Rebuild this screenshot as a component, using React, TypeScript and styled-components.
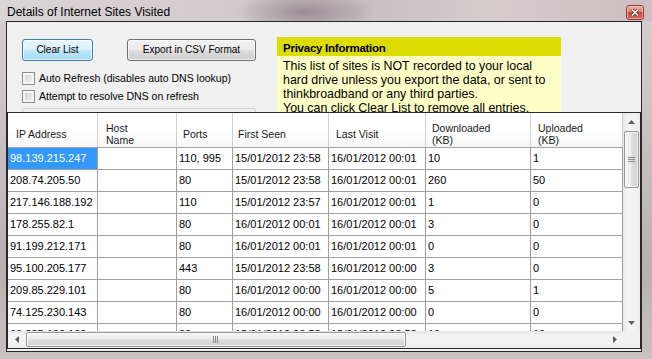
import styled, { createGlobalStyle } from 'styled-components';

const GlobalStyle = createGlobalStyle`
  html, body {
    margin: 0;
    padding: 0;
    background: #cbc3c5;
  }
  body {
    width: 652px;
    height: 359px;
    overflow: hidden;
    font-family: "Liberation Sans", Arial, sans-serif;
  }
`;

type Site = [string, string, string, string, string, string, string];

const sites: Site[] = [
  ['98.139.215.247', '', '110, 995', '15/01/2012 23:58', '16/01/2012 00:01', '10', '1'],
  ['208.74.205.50', '', '80', '15/01/2012 23:58', '16/01/2012 00:01', '260', '50'],
  ['217.146.188.192', '', '110', '15/01/2012 23:57', '16/01/2012 00:01', '1', '0'],
  ['178.255.82.1', '', '80', '16/01/2012 00:01', '16/01/2012 00:01', '3', '0'],
  ['91.199.212.171', '', '80', '16/01/2012 00:01', '16/01/2012 00:01', '0', '0'],
  ['95.100.205.177', '', '443', '15/01/2012 23:58', '16/01/2012 00:00', '3', '0'],
  ['209.85.229.101', '', '80', '16/01/2012 00:00', '16/01/2012 00:00', '5', '1'],
  ['74.125.230.143', '', '80', '16/01/2012 00:00', '16/01/2012 00:00', '0', '0'],
  ['66.235.132.160', '', '80', '15/01/2012 23:58', '15/01/2012 23:58', '10', '10'],
];

const columns = [
  { title: 'IP Address', pad: 8 },
  { title: 'Host\nName', pad: 8 },
  { title: 'Ports', pad: 6 },
  { title: 'First Seen', pad: 5 },
  { title: 'Last Visit', pad: 7 },
  { title: 'Downloaded\n(KB)', pad: 6 },
  { title: 'Uploaded\n(KB)', pad: 7 },
];

const colTemplate = '90px 79px 56px 96px 97px 105px 92px';

function Arrow({ dir }: { dir: 'up' | 'down' | 'left' | 'right' }) {
  const vertical = dir === 'up' || dir === 'down';
  const d = {
    up: 'M0 4 L3.5 0 L7 4 Z',
    down: 'M0 0 L7 0 L3.5 4 Z',
    left: 'M4 0 L4 7 L0 3.5 Z',
    right: 'M0 0 L4 3.5 L0 7 Z',
  }[dir];
  return (
    <svg width={vertical ? 7 : 4} height={vertical ? 4 : 7}>
      <path d={d} fill="#5e5e5e" />
    </svg>
  );
}

function App() {
  return (
    <>
      <GlobalStyle />
      <Window>
        <TitleBar>
          <Title>Details of Internet Sites Visited</Title>
          <CloseButton>
            <svg width="8" height="7" viewBox="0 0 8 7">
              <path d="M1 0.5 L7 6.5 M7 0.5 L1 6.5" stroke="#5a1a14" strokeWidth="3" />
              <path d="M1 0.5 L7 6.5 M7 0.5 L1 6.5" stroke="#ffffff" strokeWidth="1.6" />
            </svg>
          </CloseButton>
        </TitleBar>

        <Client>
          <TopPanel>
            <LeftCol>
              <ButtonRow>
                <WinButton $width={71} $default>
                  Clear List
                </WinButton>
                <WinButton $width={129}>Export in CSV Format</WinButton>
              </ButtonRow>
              <CheckRow>
                <CheckBox />
                <CheckLabel>Auto Refresh (disables auto DNS lookup)</CheckLabel>
              </CheckRow>
              <CheckRow>
                <CheckBox />
                <CheckLabel>Attempt to resolve DNS on refresh</CheckLabel>
              </CheckRow>
              <GroupEdge />
            </LeftCol>

            <Privacy>
              <PrivacyHead>Privacy Information</PrivacyHead>
              <PrivacyBody>
                This list of sites is NOT recorded to your local
                <br />
                hard drive unless you export the data, or sent to
                <br />
                thinkbroadband or any third parties.
                <br />
                You can click Clear List to remove all entries.
              </PrivacyBody>
            </Privacy>
          </TopPanel>

          <Grid>
            <DataArea>
              <HeaderRow>
                {columns.map((c) => (
                  <HeaderCell key={c.title} $pad={c.pad}>
                    {c.title}
                  </HeaderCell>
                ))}
              </HeaderRow>
              <Rows>
                {sites.map((s, i) => (
                  <DataRow key={s[0]}>
                    {s.map((v, j) => (
                      <DataCell key={j} $selected={i === 0 && j === 0}>
                        {v}
                      </DataCell>
                    ))}
                  </DataRow>
                ))}
              </Rows>
            </DataArea>

            <VScroll>
              <ArrowBox>
                <Arrow dir="up" />
              </ArrowBox>
              <VTrack>
                <VThumb>
                  <svg width="7" height="6">
                    <path d="M0 0.5 H7 M0 2.5 H7 M0 4.5 H7" stroke="#8a8a8a" strokeWidth="1" />
                  </svg>
                </VThumb>
              </VTrack>
              <ArrowBox>
                <Arrow dir="down" />
              </ArrowBox>
            </VScroll>

            <HScroll>
              <ArrowBox>
                <Arrow dir="left" />
              </ArrowBox>
              <HTrack>
                <HThumb>
                  <svg width="6" height="7">
                    <path d="M0.5 0 V7 M2.5 0 V7 M4.5 0 V7" stroke="#8a8a8a" strokeWidth="1" />
                  </svg>
                </HThumb>
              </HTrack>
              <ArrowBox>
                <Arrow dir="right" />
              </ArrowBox>
            </HScroll>

            <Corner />
          </Grid>
        </Client>
      </Window>
    </>
  );
}

export default App;

const Window = styled.div`
  width: 652px;
  height: 359px;
  display: flex;
  flex-direction: column;
  background: linear-gradient(180deg, #d6d0d2 0%, #c8bfc1 40%, #bbb0b0 75%, #c9c1c1 100%);
`;

const TitleBar = styled.div`
  height: 21px;
  flex-shrink: 0;
  display: flex;
  justify-content: space-between;
  align-items: flex-start;
  padding: 0 8px 0 7px;
  box-sizing: border-box;
  background: radial-gradient(ellipse 70px 22px at 305px 12px, rgba(115, 95, 105, 0.55), rgba(115, 95, 105, 0)),
    linear-gradient(90deg, #d9d4d6 0%, #d2cbce 35%, #c9bec2 55%, #d8cbce 75%, #cdbdc1 100%);
`;

const Title = styled.span`
  padding-top: 2px;
  font-size: 12px;
  line-height: 21px;
  color: #000;
  white-space: nowrap;
`;

const CloseButton = styled.div`
  margin-top: 5px;
  width: 18px;
  height: 15px;
  box-sizing: border-box;
  border: 1px solid #8d3b33;
  border-radius: 3px;
  background: linear-gradient(#eab0a6, #d98175 45%, #c5483d 50%, #d66d60);
  box-shadow: inset 0 0 0 1px rgba(255, 220, 215, 0.5);
  display: flex;
  align-items: center;
  justify-content: center;
`;

const Client = styled.div`
  flex: 1;
  min-height: 0;
  margin: 0 10px 7px 6px;
  box-sizing: border-box;
  border: 1px solid #262626;
  padding-bottom: 2px;
  background: #f0f0f0;
  display: flex;
  flex-direction: column;
`;

const TopPanel = styled.div`
  height: 90px;
  flex-shrink: 0;
  box-sizing: border-box;
  padding: 15px 0 0 15px;
  display: flex;
  align-items: flex-start;
  overflow: hidden;
`;

const LeftCol = styled.div`
  width: 234px;
  flex-shrink: 0;
  padding-top: 2px;
  display: flex;
  flex-direction: column;
`;

const ButtonRow = styled.div`
  display: flex;
  justify-content: space-between;
  margin-bottom: 11px;
`;

const WinButton = styled.button<{ $width: number; $default?: boolean }>`
  width: ${(p) => p.$width}px;
  height: 22px;
  padding: 0;
  box-sizing: border-box;
  border: 1px solid ${(p) => (p.$default ? '#3c7fb1' : '#707070')};
  border-radius: 3px;
  background: ${(p) =>
    p.$default
      ? 'linear-gradient(#eaf6fd, #d9f0fc 50%, #bee6fd 50%, #a7d9f5)'
      : 'linear-gradient(#f2f2f2, #ebebeb 50%, #dddddd 50%, #cfcfcf)'};
  box-shadow: inset 0 0 0 1px rgba(255, 255, 255, 0.65);
  font-family: "Liberation Sans", Arial, sans-serif;
  font-size: 10px;
  line-height: 20px;
  color: #000;
  text-align: center;
  white-space: nowrap;
`;

const CheckRow = styled.label`
  height: 18px;
  display: flex;
  align-items: flex-start;
  gap: 4px;
`;

const CheckBox = styled.span`
  width: 13px;
  height: 13px;
  flex-shrink: 0;
  box-sizing: border-box;
  border: 1px solid #8e8f8f;
  background: linear-gradient(135deg, #cbcfd5, #f6f6f6);
  box-shadow: inset 0 0 0 2px #f4f4f4;
`;

const CheckLabel = styled.span`
  font-size: 10.5px;
  line-height: 13px;
  color: #000;
  white-space: nowrap;
`;

const GroupEdge = styled.div`
  height: 12px;
  border: 1px solid #d2d2d2;
  border-radius: 3px;
`;

const Privacy = styled.div`
  margin-left: 21px;
  width: 284px;
  height: 100px;
  flex-shrink: 0;
  background: #ffffc8;
`;

const PrivacyHead = styled.div`
  height: 19px;
  box-sizing: border-box;
  padding: 4px 0 0 6px;
  background: #dcdc00;
  font-size: 11.5px;
  font-weight: bold;
  line-height: 15px;
  letter-spacing: -0.25px;
  color: #000;
`;

const PrivacyBody = styled.div`
  padding: 3px 0 0 6px;
  font-size: 12.4px;
  line-height: 14px;
  color: #000;
  white-space: nowrap;
`;

const Grid = styled.div`
  height: 237px;
  flex-shrink: 0;
  box-sizing: border-box;
  border: 1px solid #2b2b2b;
  background: #fff;
  display: grid;
  grid-template-columns: 615px 17px;
  grid-template-rows: 218px 17px;
`;

const DataArea = styled.div`
  display: flex;
  flex-direction: column;
  overflow: hidden;
`;

const HeaderRow = styled.div`
  height: 35px;
  flex-shrink: 0;
  box-sizing: border-box;
  display: grid;
  grid-template-columns: ${colTemplate};
  border-bottom: 1px solid #a0a0a0;
  background: linear-gradient(#ffffff, #ffffff 45%, #f6f7f8);
`;

const HeaderCell = styled.div<{ $pad: number }>`
  box-sizing: border-box;
  border-right: 1px solid #d0d0d0;
  padding: 7px 0 0 ${(p) => p.$pad}px;
  display: flex;
  align-items: center;
  white-space: pre-line;
  font-size: 10.5px;
  line-height: 12px;
  color: #1a1a1a;
`;

const Rows = styled.div`
  flex: 1;
  overflow: hidden;
`;

const DataRow = styled.div`
  height: 22px;
  box-sizing: border-box;
  display: grid;
  grid-template-columns: ${colTemplate};
  border-bottom: 1px solid #a0a0a0;
`;

const DataCell = styled.div<{ $selected?: boolean }>`
  box-sizing: border-box;
  border-right: 1px solid #a0a0a0;
  padding-left: 2px;
  font-size: 11px;
  line-height: 21px;
  white-space: nowrap;
  overflow: hidden;
  background: ${(p) => (p.$selected ? '#3399ff' : '#fff')};
  color: ${(p) => (p.$selected ? '#fff' : '#000')};
`;

const ArrowBox = styled.div`
  width: 17px;
  height: 17px;
  flex-shrink: 0;
  display: flex;
  align-items: center;
  justify-content: center;
`;

const VScroll = styled.div`
  display: flex;
  flex-direction: column;
  background: linear-gradient(90deg, #e6e6e6, #f3f3f3 25%, #f3f3f3 75%, #ebebeb);
`;

const VTrack = styled.div`
  flex: 1;
  padding: 1px 1px 0 1px;
`;

const VThumb = styled.div`
  height: 57px;
  box-sizing: border-box;
  border: 1px solid #979797;
  border-radius: 2px;
  background: linear-gradient(90deg, #f4f4f4, #ececec 45%, #dcdcdc 55%, #d2d2d2);
  box-shadow: inset 0 0 0 1px rgba(255, 255, 255, 0.7);
  display: flex;
  align-items: center;
  justify-content: center;
`;

const HScroll = styled.div`
  display: flex;
  background: linear-gradient(180deg, #e6e6e6, #f3f3f3 25%, #f3f3f3 75%, #ebebeb);
`;

const HTrack = styled.div`
  flex: 1;
  padding: 1px 0 1px 1px;
`;

const HThumb = styled.div`
  width: 380px;
  height: 100%;
  box-sizing: border-box;
  border: 1px solid #979797;
  border-radius: 2px;
  background: linear-gradient(180deg, #f4f4f4, #ececec 45%, #dcdcdc 55%, #d2d2d2);
  box-shadow: inset 0 0 0 1px rgba(255, 255, 255, 0.7);
  display: flex;
  align-items: center;
  justify-content: center;
`;

const Corner = styled.div`
  background: #f0f0f0;
`;
